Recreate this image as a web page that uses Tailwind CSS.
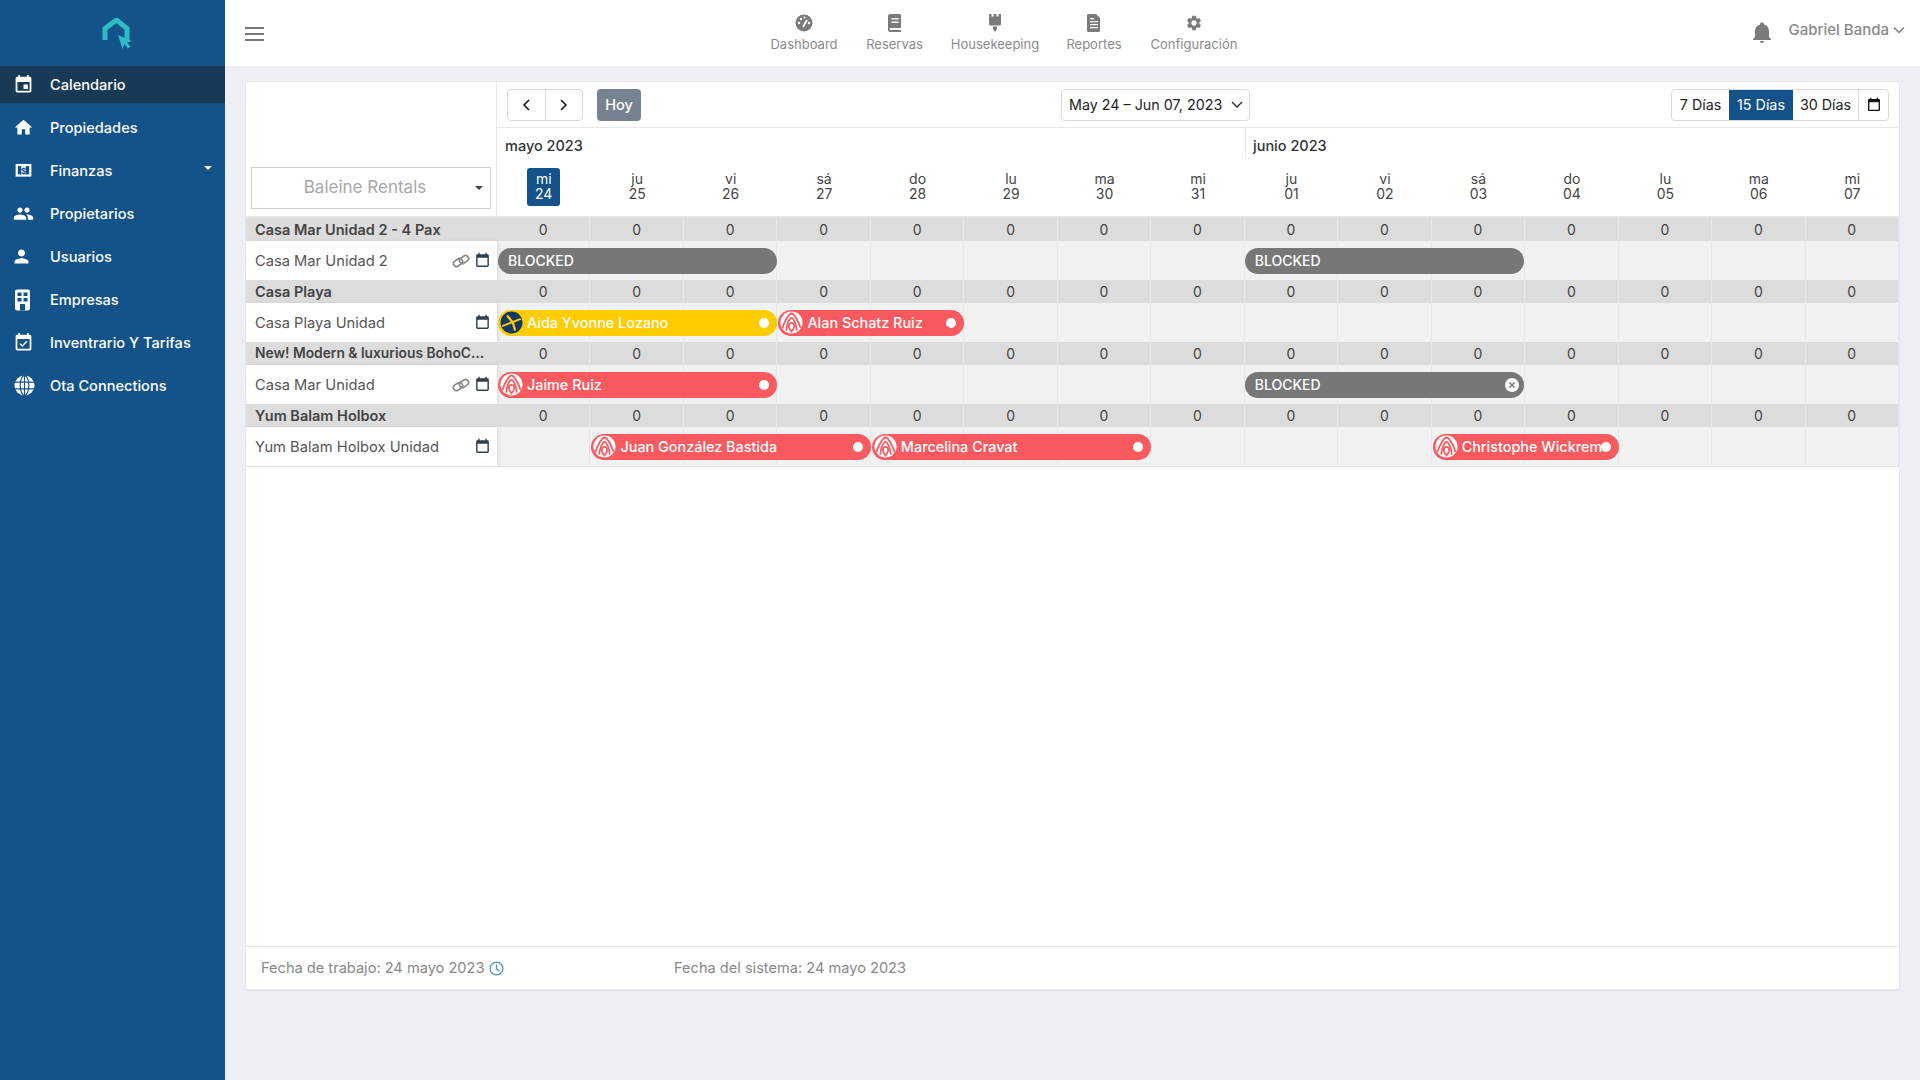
<!DOCTYPE html>
<html lang="es">
<head>
<meta charset="utf-8">
<title>Calendario</title>
<script src="https://cdn.jsdelivr.net/npm/@tailwindcss/browser@4"></script>
</head>
<body class="font-['Inter','Noto_Sans',sans-serif] bg-[#ecf0f5] text-[#444]">
<svg class="hidden">
  <symbol id="cal" viewBox="0 0 24 24"><path fill="currentColor" d="M19 3h-1V1h-2v2H8V1H6v2H5C3.900 3 3 3.900 3 5v14c0 1.100.9 2 2 2h14c1.100 0 2-.9 2-2V5c0-1.100-.9-2-2-2zm0 16H5V8h14v11z"/></symbol>
  <symbol id="link" viewBox="0 0 24 24"><g fill="none" stroke="currentColor" stroke-width="2.200"><rect x="1.500" y="10" width="13" height="8" rx="4" transform="rotate(-35 8 14)"/><rect x="9.500" y="6" width="13" height="8" rx="4" transform="rotate(-35 16 10)"/></g></symbol>
  <symbol id="abnb" viewBox="0 0 24 24"><circle cx="12" cy="12" r="11.500" fill="#fff"/><g fill="none" stroke="#f95a60" stroke-width="1.800"><path d="M2.500 18C4 13 7 7 10 3.500q2-1.800 4 0C17 7 20 13 21.500 18"/><path d="M6.500 20.500C7 15 9 10 10.500 8q1.500-1.500 3 0C15 10 17 15 17.500 20.500"/><path d="M12 21.500C10.500 19.500 9 17.500 9.200 15.500 9.500 13 10.500 12.300 12 12.300s2.500.7 2.800 3.200C15 17.500 13.500 19.500 12 21.500z"/></g></symbol>
  <symbol id="exp" viewBox="0 0 24 24"><circle cx="12" cy="12" r="11.500" fill="#123a63"/><g fill="none" stroke="#ffcc00" stroke-linecap="round"><path stroke-width="2" d="M3 15.500 21 8.500"/><path stroke-width="2.400" d="M8 5.500 13.500 12 15.500 19.500"/></g></symbol>
</svg>
<div class="flex h-[1080px] w-[1920px] overflow-hidden">

  <aside class="w-[225px] shrink-0 bg-[#14528a] text-white">
    <div class="flex h-[66px] items-center justify-center pl-[9px] pt-[2px]">
      <svg class="h-[32px] w-[32px]" viewBox="0 0 32 32"><path fill="none" stroke="#2fbcc9" stroke-width="5" d="M4 22V10.500L15.500 2 26 10.500V22"/><path fill="#2fbcc9" d="M17 17l14 6-5 1.500 3.500 4-2.500 2-3.500-4.200-2 4.700z"/></svg>
    </div>
    <nav class="flex flex-col gap-[6px] text-[14.600px] font-medium leading-[22px]">
      <a class="flex h-[37px] items-center gap-[16px] bg-[#193a56] pl-[13px]"><svg class="h-[21px] w-[21px]" viewBox="0 0 24 24" fill="#fff"><path d="M19 3h-1V1h-2v2H8V1H6v2H5C3.900 3 3 3.900 3 5v14c0 1.100.9 2 2 2h14c1.100 0 2-.9 2-2V5c0-1.100-.9-2-2-2zm0 16H5V9h14v10zM12 12h5v5h-5z"/></svg>Calendario</a>
      <a class="flex h-[37px] items-center gap-[16px] pl-[13px]"><svg class="h-[21px] w-[21px]" viewBox="0 0 24 24" fill="#fff"><path d="M10 20v-6h4v6h5v-8h3L12 3 2 12h3v8z"/></svg>Propiedades</a>
      <a class="relative flex h-[37px] items-center gap-[16px] pl-[13px]"><svg class="h-[21px] w-[21px]" viewBox="0 0 24 24"><rect x="3" y="4.500" width="18" height="14.500" fill="#fff"/><rect x="5.500" y="7" width="13" height="9.500" fill="#14528a"/><rect x="9.500" y="7" width="5" height="9.500" fill="#fff"/><text x="12" y="15.500" text-anchor="middle" font-size="9" font-weight="700" fill="#14528a">$</text></svg>Finanzas<span class="absolute right-[13px] top-[14px] h-0 w-0 border-x-[4px] border-t-[4px] border-x-transparent border-t-white"></span></a>
      <a class="flex h-[37px] items-center gap-[16px] pl-[13px]"><svg class="h-[21px] w-[21px]" viewBox="0 0 24 24" fill="#fff"><path d="M16 11c1.660 0 2.990-1.340 2.990-3S17.660 5 16 5c-1.660 0-3 1.340-3 3s1.340 3 3 3zm-8 0c1.660 0 2.990-1.340 2.990-3S9.660 5 8 5C6.340 5 5 6.340 5 8s1.340 3 3 3zm0 2c-2.330 0-7 1.170-7 3.500V19h14v-2.500c0-2.330-4.670-3.500-7-3.500zm8 0c-.29 0-.62.02-.97.05 1.160.84 1.970 1.970 1.970 3.450V19h6v-2.500c0-2.330-4.670-3.500-7-3.500z"/></svg>Propietarios</a>
      <a class="flex h-[37px] items-center gap-[16px] pl-[13px]"><svg class="-ml-[2px] mr-[2px] h-[21px] w-[21px]" viewBox="0 0 24 24" fill="#fff"><path d="M12 12c2.210 0 4-1.790 4-4s-1.790-4-4-4-4 1.790-4 4 1.790 4 4 4zm0 2c-2.670 0-8 1.340-8 4v2h16v-2c0-2.660-5.330-4-8-4z"/></svg>Usuarios</a>
      <a class="flex h-[37px] items-center gap-[16px] pl-[13px]"><svg class="h-[22px] w-[21px]" viewBox="0 0 21 22"><rect x="2" y="0.500" width="15" height="21" rx="2" fill="#fff"/><g fill="#14528a"><rect x="4.500" y="3.500" width="4" height="3.500"/><rect x="10.500" y="3.500" width="4" height="3.500"/><rect x="4.500" y="9" width="4" height="3.500"/><rect x="10.500" y="9" width="4" height="3.500"/><rect x="7" y="15" width="5" height="6.500"/></g></svg>Empresas</a>
      <a class="flex h-[37px] items-center gap-[16px] pl-[13px]"><svg class="h-[21px] w-[21px]" viewBox="0 0 24 24" fill="#fff"><path d="M19 3h-1V1h-2v2H8V1H6v2H5C3.900 3 3 3.900 3 5v14c0 1.100.9 2 2 2h14c1.100 0 2-.9 2-2V5c0-1.100-.9-2-2-2zm0 16H5V8h14v11z"/><path d="M16.530 11.060 15.470 10l-4.880 4.880-2.120-2.120-1.060 1.060L10.590 17z"/></svg>Inventrario Y Tarifas</a>
      <a class="flex h-[37px] items-center gap-[15px] pl-[14px]"><svg class="h-[21px] w-[21px]" viewBox="0 0 22 22"><circle cx="11" cy="11" r="10.500" fill="#fff"/><g fill="none" stroke="#14528a" stroke-width="1.200"><ellipse cx="11" cy="11" rx="4.500" ry="10.500"/><path d="M11 .5v21M1 7.500h20M1 14.500h20"/></g></svg>Ota Connections</a>
    </nav>
  </aside>

  <div class="flex min-w-0 flex-1 flex-col">
    <header class="relative flex h-[66px] shrink-0 items-center justify-between bg-white pl-[20px] pr-[15px]">
      <svg class="mt-[1px] h-[14px] w-[19px]" viewBox="0 0 19 14" fill="#777"><rect width="19" height="2"/><rect y="6" width="19" height="2"/><rect y="12" width="19" height="2"/></svg>
      <nav class="absolute left-[533px] top-[14px] flex text-[13px] text-[#8a8a8a]">
        <a class="flex w-[92px] flex-col items-center gap-[3px]"><svg class="h-[18px] w-[18px]" viewBox="0 0 18 18"><circle cx="9" cy="9" r="8.500" fill="#7b7b7b"/><path d="M8 13l4-7" stroke="#fff" stroke-width="1.800"/><g fill="#fff"><circle cx="4" cy="9" r="1.200"/><circle cx="6" cy="5" r="1.200"/><circle cx="9.500" cy="3.500" r="1"/><circle cx="14" cy="9" r="1.200"/></g></svg>Dashboard</a>
        <a class="ml-[1px] flex w-[87px] flex-col items-center gap-[3px]"><svg class="h-[18px] w-[18px]" viewBox="0 0 18 18"><path fill="#7b7b7b" d="M2 2a2 2 0 0 1 2-2h10a1 1 0 0 1 1 1v13H4.500a1 1 0 0 0 0 2H15v2H4a2 2 0 0 1-2-2z"/><path fill="#fff" d="M5.500 4h7v1.500h-7zM5.500 7.500h7V9h-7z"/></svg>Reservas</a>
        <a class="ml-[2px] flex w-[110px] flex-col items-center gap-[3px]"><svg class="h-[18px] w-[18px]" viewBox="0 0 18 18" fill="#7b7b7b"><path d="M3 0h2.500v2.500H7.500V0h3v2.500h2V0H15v10a1.500 1.500 0 0 1-1.500 1.500h-9A1.500 1.500 0 0 1 3 10zM7 12.500h4V15l-2 3-2-3z"/></svg>Housekeeping</a>
        <a class="flex w-[88px] flex-col items-center gap-[3px]"><svg class="h-[18px] w-[18px]" viewBox="0 0 18 18"><path fill="#7b7b7b" d="M3 0h8l4 4v12.500a1.500 1.500 0 0 1-1.500 1.500h-10A1.500 1.500 0 0 1 2 16.500V1.500A1.500 1.500 0 0 1 3.500 0z"/><path fill="#fff" d="M5 7h8v1.300H5zM5 10h8v1.300H5zM5 13h8v1.300H5zM5 4h4v1.300H5z"/></svg>Reportes</a>
        <a class="ml-[1px] flex w-[110px] flex-col items-center gap-[3px]"><svg class="h-[18px] w-[18px]" viewBox="0 0 24 24" fill="#7b7b7b"><path d="M19.140 12.940c.04-.3.06-.61.06-.94 0-.32-.02-.64-.07-.94l2.030-1.580c.18-.14.23-.41.12-.61l-1.920-3.320c-.12-.22-.37-.29-.59-.22l-2.390.96c-.5-.38-1.030-.7-1.620-.94l-.36-2.540c-.04-.24-.24-.41-.48-.41h-3.840c-.24 0-.43.17-.47.41l-.36 2.540c-.59.24-1.130.57-1.620.94l-2.390-.96c-.22-.08-.47 0-.59.22L2.740 8.870c-.12.21-.08.47.12.61l2.030 1.580c-.05.3-.09.63-.09.94s.02.64.07.94l-2.030 1.580c-.18.14-.23.41-.12.61l1.920 3.320c.12.22.37.29.59.22l2.390-.96c.5.38 1.030.7 1.620.94l.36 2.540c.05.24.24.41.48.41h3.840c.24 0 .44-.17.47-.41l.36-2.540c.59-.24 1.130-.56 1.620-.94l2.390.96c.22.08.47 0 .59-.22l1.920-3.320c.12-.22.07-.47-.12-.61l-2.010-1.580zM12 15.600c-1.980 0-3.600-1.620-3.600-3.600s1.620-3.600 3.600-3.600 3.600 1.620 3.600 3.600-1.620 3.600-3.600 3.600z"/></svg>Configuración</a>
      </nav>
      <div class="flex items-center text-[15px] font-medium text-[#8a8a8a]">
        <svg class="relative -top-[1px] mr-[14px] h-[24px] w-[24px]" viewBox="0 0 24 24" fill="#7b7b7b"><path d="M12 23c1.100 0 2-.9 2-2h-4c0 1.100.89 2 2 2zm7-6v-6c0-3.070-1.640-5.640-5-6.320V4c0-.83-.67-1.500-1.500-1.500h-1c-.83 0-1.500.67-1.500 1.500v.68C6.630 5.360 5 7.920 5 11v6l-2 2v1h18v-1z"/></svg>
        <span class="relative -top-[3px]">Gabriel Banda</span>
        <svg class="relative -top-[3px] ml-[4px] h-[8px] w-[12px]" viewBox="0 0 12 8" fill="none" stroke="#777" stroke-width="1.300"><path d="M1 1.500l5 5 5-5"/></svg>
      </div>
    </header>

    <main class="mx-[20px] mt-[15px] flex flex-col text-[14.500px]">
      <div class="flex h-[866px] flex-col border border-[#e6e6e6] bg-white">
        <div class="flex h-[134px] shrink-0">
          <div class="flex w-[251px] shrink-0 flex-col justify-end border-r border-[#e8e8e8] px-[5px] pb-[7px]">
            <div class="relative flex h-[42px] w-[240px] items-center justify-center border border-[#cfcfcf] pr-[12px] text-[17px] text-[#a8a8a8]">Baleine Rentals<span class="absolute right-[7px] top-[18px] h-0 w-0 border-x-[4px] border-t-[4px] border-x-transparent border-t-[#444]"></span></div>
          </div>
          <div class="flex min-w-0 flex-1 flex-col">
            <div class="flex h-[46px] items-center border-b border-[#e8e8e8] pl-[10px] pr-[10px] text-[#222]">
              <div class="flex h-[32px] w-[76px] rounded-[4px] border border-[#d9d9d9]">
                <button class="flex flex-1 items-center justify-center border-r border-[#d9d9d9]"><svg class="h-[12px] w-[8px]" viewBox="0 0 8 12" fill="none" stroke="#111" stroke-width="1.500"><path d="M7 1 2 6l5 5"/></svg></button>
                <button class="flex flex-1 items-center justify-center"><svg class="h-[12px] w-[8px]" viewBox="0 0 8 12" fill="none" stroke="#111" stroke-width="1.500"><path d="m1 1 5 5-5 5"/></svg></button>
              </div>
              <button class="ml-[14px] h-[32px] w-[44px] rounded-[4px] bg-[#778290] font-medium text-white">Hoy</button>
              <div class="ml-[420px] flex h-[32px] w-[189px] items-center justify-between rounded-[4px] border border-[#d9d9d9] pl-[7px] pr-[6px] text-[14.300px]">May 24 – Jun 07, 2023<svg class="h-[7px] w-[12px]" viewBox="0 0 12 7" fill="none" stroke="#222" stroke-width="1.300"><path d="m1 1 5 5 5-5"/></svg></div>
              <div class="ml-auto flex h-[32px] w-[218px] overflow-hidden rounded-[4px] border border-[#d9d9d9] text-[14.300px]">
                <span class="flex w-[57px] items-center justify-center">7 Días</span>
                <span class="flex w-[64px] items-center justify-center bg-[#14528a] text-white">15 Días</span>
                <span class="flex w-[66px] items-center justify-center border-r border-[#d9d9d9]">30 Días</span>
                <span class="flex flex-1 items-center justify-center text-[#111]"><svg class="h-[16px] w-[16px]"><use href="#cal"/></svg></span>
              </div>
            </div>
            <div class="flex h-[30px] items-center font-medium text-[#333]">
              <div class="w-[748px] pl-[8px] pt-[5px]">mayo 2023</div>
              <div class="flex h-full items-center border-l border-[#e8e8e8] pl-[7px] pt-[5px]">junio 2023</div>
            </div>
            <div class="grid flex-1 grid-cols-[repeat(15,1fr)] text-center text-[14px] leading-[15px] text-[#444] [&>div]:flex [&>div]:flex-col [&>div]:pt-[13px]">
              <div class="items-center !pt-[10px]"><span class="flex h-[38px] w-[33px] flex-col justify-center rounded-[3px] bg-[#14528a] pb-[2px] text-white"><span>mi</span><span>24</span></span></div>
              <div><span>ju</span><span>25</span></div>
              <div><span>vi</span><span>26</span></div>
              <div><span>sá</span><span>27</span></div>
              <div><span>do</span><span>28</span></div>
              <div><span>lu</span><span>29</span></div>
              <div><span>ma</span><span>30</span></div>
              <div><span>mi</span><span>31</span></div>
              <div><span>ju</span><span>01</span></div>
              <div><span>vi</span><span>02</span></div>
              <div><span>sá</span><span>03</span></div>
              <div><span>do</span><span>04</span></div>
              <div><span>lu</span><span>05</span></div>
              <div><span>ma</span><span>06</span></div>
              <div><span>mi</span><span>07</span></div>
            </div>
          </div>
        </div>

        <!-- Rows -->
        <div class="flex h-[25px] items-stretch border-t-[2px] border-[#e4e4e4] bg-[#dcdcdc]">
          <div class="flex w-[251px] shrink-0 items-center truncate pl-[9px] font-semibold text-[#444]">Casa Mar Unidad 2 - 4 Pax</div>
          <div class="grid flex-1 grid-cols-[repeat(15,1fr)] items-center text-center text-[14px] [&>span]:flex [&>span]:h-full [&>span]:items-center [&>span]:justify-center [&>span]:border-r [&>span]:border-[#e8e8e8]"><span>0</span><span>0</span><span>0</span><span>0</span><span>0</span><span>0</span><span>0</span><span>0</span><span>0</span><span>0</span><span>0</span><span>0</span><span>0</span><span>0</span><span>0</span></div>
        </div>
        <div class="flex h-[39px] bg-[#f1f1f1]">
          <div class="flex w-[251px] shrink-0 items-center justify-between bg-white pl-[9px] pr-[6px] text-[14.700px] leading-[22px] text-[#555] shadow-[2px_0_3px_rgba(0,0,0,0.08)]"><span>Casa Mar Unidad 2</span><span class="flex items-center gap-[4px] text-[#2f3f4f]"><svg class="h-[18px] w-[18px] text-[#888]"><use href="#link"/></svg><svg class="h-[17px] w-[17px]"><use href="#cal"/></svg></span></div>
          <div class="relative grid flex-1 grid-cols-[repeat(15,1fr)] [&>i]:border-r [&>i]:border-[#e8e8e8]"><i></i><i></i><i></i><i></i><i></i><i></i><i></i><i></i><i></i><i></i><i></i><i></i><i></i><i></i><i></i>
            <div class="absolute inset-0 grid grid-cols-[repeat(15,1fr)] items-center text-[14px] font-medium text-white">
              <div class="col-start-1 col-span-3 ml-px flex h-[26px] items-center rounded-full bg-[#777] pl-[10px]">BLOCKED</div>
              <div class="col-start-9 col-span-3 mr-[1px] flex h-[26px] items-center rounded-full bg-[#777] pl-[10px]">BLOCKED</div>
            </div>
          </div>
        </div>

        <div class="flex h-[23px] items-stretch bg-[#dcdcdc]">
          <div class="flex w-[251px] shrink-0 items-center truncate pl-[9px] font-semibold text-[#444]">Casa Playa</div>
          <div class="grid flex-1 grid-cols-[repeat(15,1fr)] items-center text-center text-[14px] [&>span]:flex [&>span]:h-full [&>span]:items-center [&>span]:justify-center [&>span]:border-r [&>span]:border-[#e8e8e8]"><span>0</span><span>0</span><span>0</span><span>0</span><span>0</span><span>0</span><span>0</span><span>0</span><span>0</span><span>0</span><span>0</span><span>0</span><span>0</span><span>0</span><span>0</span></div>
        </div>
        <div class="flex h-[39px] bg-[#f1f1f1]">
          <div class="flex w-[251px] shrink-0 items-center justify-between bg-white pl-[9px] pr-[6px] text-[14.700px] leading-[22px] text-[#555] shadow-[2px_0_3px_rgba(0,0,0,0.08)]"><span>Casa Playa Unidad</span><span class="flex items-center text-[#2f3f4f]"><svg class="h-[17px] w-[17px]"><use href="#cal"/></svg></span></div>
          <div class="relative grid flex-1 grid-cols-[repeat(15,1fr)] [&>i]:border-r [&>i]:border-[#e8e8e8]"><i></i><i></i><i></i><i></i><i></i><i></i><i></i><i></i><i></i><i></i><i></i><i></i><i></i><i></i><i></i>
            <div class="absolute inset-0 grid grid-cols-[repeat(15,1fr)] items-center text-[14.400px] font-medium text-white">
              <div class="col-start-1 col-span-3 ml-px flex h-[26px] items-center rounded-full bg-[#ffcc00] pl-[2px] pr-[8px]"><svg class="h-[23px] w-[23px] shrink-0"><use href="#exp"/></svg><span class="ml-[4px] min-w-0 flex-1 truncate">Aida Yvonne Lozano</span><span class="h-[10px] w-[10px] shrink-0 rounded-full bg-white"></span></div>
              <div class="col-start-4 col-span-2 ml-px flex h-[26px] items-center rounded-full bg-[#f95a60] pl-[2px] pr-[8px]"><svg class="h-[23px] w-[23px] shrink-0"><use href="#abnb"/></svg><span class="ml-[4px] min-w-0 flex-1 truncate">Alan Schatz Ruiz</span><span class="h-[10px] w-[10px] shrink-0 rounded-full bg-white"></span></div>
            </div>
          </div>
        </div>

        <div class="flex h-[23px] items-stretch bg-[#dcdcdc]">
          <div class="w-[251px] shrink-0 whitespace-nowrap pl-[9px] text-[13.800px] font-semibold leading-[23px] text-[#444]">New! Modern &amp; luxurious BohoC…</div>
          <div class="grid flex-1 grid-cols-[repeat(15,1fr)] items-center text-center text-[14px] [&>span]:flex [&>span]:h-full [&>span]:items-center [&>span]:justify-center [&>span]:border-r [&>span]:border-[#e8e8e8]"><span>0</span><span>0</span><span>0</span><span>0</span><span>0</span><span>0</span><span>0</span><span>0</span><span>0</span><span>0</span><span>0</span><span>0</span><span>0</span><span>0</span><span>0</span></div>
        </div>
        <div class="flex h-[39px] bg-[#f1f1f1]">
          <div class="flex w-[251px] shrink-0 items-center justify-between bg-white pl-[9px] pr-[6px] text-[14.700px] leading-[22px] text-[#555] shadow-[2px_0_3px_rgba(0,0,0,0.08)]"><span>Casa Mar Unidad</span><span class="flex items-center gap-[4px] text-[#2f3f4f]"><svg class="h-[18px] w-[18px] text-[#888]"><use href="#link"/></svg><svg class="h-[17px] w-[17px]"><use href="#cal"/></svg></span></div>
          <div class="relative grid flex-1 grid-cols-[repeat(15,1fr)] [&>i]:border-r [&>i]:border-[#e8e8e8]"><i></i><i></i><i></i><i></i><i></i><i></i><i></i><i></i><i></i><i></i><i></i><i></i><i></i><i></i><i></i>
            <div class="absolute inset-0 grid grid-cols-[repeat(15,1fr)] items-center text-[14.400px] font-medium text-white">
              <div class="col-start-1 col-span-3 ml-px flex h-[26px] items-center rounded-full bg-[#f95a60] pl-[2px] pr-[8px]"><svg class="h-[23px] w-[23px] shrink-0"><use href="#abnb"/></svg><span class="ml-[4px] min-w-0 flex-1 truncate">Jaime Ruiz</span><span class="h-[10px] w-[10px] shrink-0 rounded-full bg-white"></span></div>
              <div class="col-start-9 col-span-3 mr-[1px] flex h-[26px] items-center justify-between rounded-full bg-[#777] pl-[10px] pr-[5px] text-[14px]">BLOCKED<svg class="h-[14px] w-[14px]" viewBox="0 0 14 14"><circle cx="7" cy="7" r="7" fill="#fff"/><path d="M4.500 4.500l5 5m0-5-5 5" stroke="#777" stroke-width="1.400"/></svg></div>
            </div>
          </div>
        </div>

        <div class="flex h-[23px] items-stretch bg-[#dcdcdc]">
          <div class="flex w-[251px] shrink-0 items-center truncate pl-[9px] font-semibold text-[#444]">Yum Balam Holbox</div>
          <div class="grid flex-1 grid-cols-[repeat(15,1fr)] items-center text-center text-[14px] [&>span]:flex [&>span]:h-full [&>span]:items-center [&>span]:justify-center [&>span]:border-r [&>span]:border-[#e8e8e8]"><span>0</span><span>0</span><span>0</span><span>0</span><span>0</span><span>0</span><span>0</span><span>0</span><span>0</span><span>0</span><span>0</span><span>0</span><span>0</span><span>0</span><span>0</span></div>
        </div>
        <div class="flex h-[40px] border-b border-[#e4e4e4] bg-[#f1f1f1]">
          <div class="flex w-[251px] shrink-0 items-center justify-between bg-white pl-[9px] pr-[6px] text-[14.700px] leading-[22px] text-[#555] shadow-[2px_0_3px_rgba(0,0,0,0.08)]"><span>Yum Balam Holbox Unidad</span><span class="flex items-center text-[#2f3f4f]"><svg class="h-[17px] w-[17px]"><use href="#cal"/></svg></span></div>
          <div class="relative grid flex-1 grid-cols-[repeat(15,1fr)] [&>i]:border-r [&>i]:border-[#e8e8e8]"><i></i><i></i><i></i><i></i><i></i><i></i><i></i><i></i><i></i><i></i><i></i><i></i><i></i><i></i><i></i>
            <div class="absolute inset-0 grid grid-cols-[repeat(15,1fr)] items-center text-[14.400px] font-medium text-white">
              <div class="col-start-2 col-span-3 ml-px flex h-[26px] items-center rounded-full bg-[#f95a60] pl-[2px] pr-[8px]"><svg class="h-[23px] w-[23px] shrink-0"><use href="#abnb"/></svg><span class="ml-[4px] min-w-0 flex-1 truncate">Juan González Bastida</span><span class="h-[10px] w-[10px] shrink-0 rounded-full bg-white"></span></div>
              <div class="col-start-5 col-span-3 ml-px flex h-[26px] items-center rounded-full bg-[#f95a60] pl-[2px] pr-[8px]"><svg class="h-[23px] w-[23px] shrink-0"><use href="#abnb"/></svg><span class="ml-[4px] min-w-0 flex-1 truncate">Marcelina Cravat</span><span class="h-[10px] w-[10px] shrink-0 rounded-full bg-white"></span></div>
              <div class="col-start-11 col-span-2 ml-px flex h-[26px] items-center rounded-full bg-[#f95a60] pl-[2px] pr-[8px]"><svg class="h-[23px] w-[23px] shrink-0"><use href="#abnb"/></svg><span class="ml-[4px] min-w-0 flex-1 whitespace-nowrap">Christophe Wickrem</span><span class="h-[10px] w-[10px] shrink-0 rounded-full bg-white"></span></div>
            </div>
          </div>
        </div>
        <div class="flex-1"></div>
      </div>
      <footer class="flex h-[43px] items-center border-x border-b border-[#e6e6e6] bg-white pl-[15px] text-[14.600px] leading-[22px] text-[#888] shadow-[0_1px_1px_rgba(0,0,0,0.04)]">
        <span class="w-[413px]">Fecha de trabajo: 24 mayo 2023 <svg class="inline h-[15px] w-[15px] align-[-3px]" viewBox="0 0 16 16" fill="none" stroke="#4a90d9" stroke-width="1.400"><circle cx="8" cy="8" r="6.800"/><path d="M8 3.800V8.500l3 2"/></svg></span>
        <span>Fecha del sistema: 24 mayo 2023</span>
      </footer>
    </main>
  </div>
</div>
</body>
</html>
